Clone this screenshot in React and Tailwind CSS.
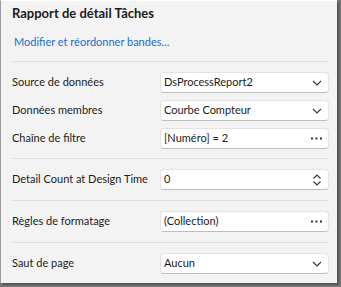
const FONT = { fontFamily: 'Lato, "Noto Sans", sans-serif' };

function Chevron() {
  return (
    <svg width="10" height="6" viewBox="0 0 10 6" className="text-[#333]">
      <path d="M1 1l4 4 4-4" fill="none" stroke="currentColor" strokeWidth="1.1" />
    </svg>
  );
}

function Dots() {
  return (
    <svg width="11" height="3" viewBox="0 0 11 3" className="text-[#333]">
      <rect x="0" y="0.5" width="2" height="2" fill="currentColor" />
      <rect x="4.5" y="0.5" width="2" height="2" fill="currentColor" />
      <rect x="9" y="0.5" width="2" height="2" fill="currentColor" />
    </svg>
  );
}

function Spin() {
  return (
    <svg width="10" height="14" viewBox="0 0 10 14" className="text-[#333]">
      <path d="M1.5 5.5L5 2l3.5 3.5M1.5 8.5L5 12l3.5-3.5" fill="none" stroke="currentColor" strokeWidth="1.1" />
    </svg>
  );
}

function Field({ label, value, icon }) {
  return (
    <div className="flex items-center h-[21px]">
      <div className="w-[148px] text-[11px] text-[#1b1b1b] whitespace-nowrap">{label}</div>
      <div className="flex-1 h-full flex items-center justify-between bg-white rounded-[4px] border border-[#e3e3e3] border-b-[#bdbdbd] pl-[3px] pr-[6px]">
        <span className="text-[11px] text-[#1b1b1b] whitespace-nowrap">{value}</span>
        {icon === 'chevron' && <Chevron />}
        {icon === 'dots' && <Dots />}
        {icon === 'spin' && <Spin />}
      </div>
    </div>
  );
}

export default function App() {
  return (
    <div className="w-[341px] h-[287px] bg-[#7a7a7a]" style={FONT}>
      <div className="w-[337px] h-[283px] bg-[#f3f3f3] border-l border-l-[#9a9a9a] border-t border-t-white pl-[11px] pr-[8px] shadow-[2px_2px_2px_rgba(0,0,0,0.35)]">
        <div className="mt-[3px] h-[18px] leading-[18px] text-[13px] font-bold text-[#1b1b1b]">
          Rapport de détail Tâches
        </div>
        <div className="mt-[11px] h-[18px] leading-[18px] pl-[2px] text-[11px] text-[#1a6cc7]">
          Modifier et réordonner bandes...
        </div>
        <div className="mt-[10px] border-t border-[#dedede] pt-[10px] pb-[9px] flex flex-col gap-[7px]">
          <Field label="Source de données" value="DsProcessReport2" icon="chevron" />
          <Field label="Données membres" value="Courbe Compteur" icon="chevron" />
          <Field label="Chaîne de filtre" value="[Numéro] = 2" icon="dots" />
        </div>
        <div className="border-t border-[#dedede] py-[10px]">
          <Field label="Detail Count at Design Time" value="0" icon="spin" />
        </div>
        <div className="border-t border-[#dedede] py-[10px]">
          <Field label="Règles de formatage" value="(Collection)" icon="dots" />
        </div>
        <div className="border-t border-[#dedede] pt-[10px]">
          <Field label="Saut de page" value="Aucun" icon="chevron" />
        </div>
      </div>
    </div>
  );
}
